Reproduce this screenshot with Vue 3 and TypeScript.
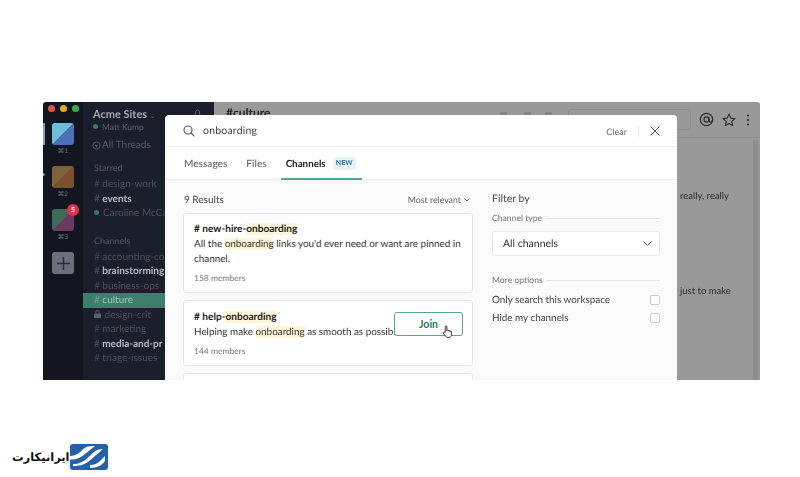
<script setup lang="ts">
interface Chan { name: string; bold?: boolean; active?: boolean; lock?: boolean }
const channels: Chan[] = [
  { name: 'accounting-costs' },
  { name: 'brainstorming', bold: true },
  { name: 'business-ops' },
  { name: 'culture', active: true },
  { name: 'design-crit', lock: true },
  { name: 'marketing' },
  { name: 'media-and-pr', bold: true },
  { name: 'triage-issues' },
]
</script>

<template>
  <div class="page">
    <div class="window">
      <aside class="rail">
        <i class="mark"></i><i class="pip"></i>
        <div class="lights"><i class="r"></i><i class="y"></i><i class="g"></i></div>
        <div class="team t1"></div><span class="key">⌘1</span>
        <div class="team t2"></div><span class="key">⌘2</span>
        <div class="team t3"><b class="badge">5</b></div><span class="key">⌘3</span>
        <div class="plus">
          <svg width="13" height="13" viewBox="0 0 14 14"><path d="M7 0v14M0 7h14" stroke="#2a2c3a" stroke-width="1.6" /></svg>
        </div>
      </aside>
      <aside class="side">
        <div class="acme">Acme Sites <small>⌄</small></div>
        <svg class="bell" width="9" height="10" viewBox="0 0 9 10" fill="none" stroke="#666a78"><path d="M4.500 1C3 1 2.500 2.500 2.500 4S1.500 7 .7 7.500h7.600C7.500 7 6.500 5.500 6.500 4S6 1 4.500 1z" /></svg>
        <div class="user"><i class="dot"></i>Matt Kump</div>
        <div class="threads">
          <svg width="9" height="9" viewBox="0 0 10 10" fill="none" stroke="#5d6070"><circle cx="5" cy="5" r="4" /><path d="M3.500 5h3M5 5v2" /></svg>
          All Threads
        </div>
        <div class="head starred">Starred</div>
        <div class="item"><span class="hash">#</span> design-work</div>
        <div class="item bold"><span class="hash">#</span> events</div>
        <div class="item"><i class="dot"></i>Caroline McCarthy</div>
        <div class="head chans">Channels</div>
        <div v-for="c in channels" :key="c.name" class="item" :class="{ bold: c.bold, active: c.active }">
          <svg v-if="c.lock" class="lock" width="7" height="8" viewBox="0 0 7 8"><rect y="3.400" width="7" height="4.600" rx="1" fill="#5d6070" /><path d="M1.700 3.600V2.400a1.800 1.800 0 0 1 3.600 0v1.200" fill="none" stroke="#5d6070" /></svg>
          <span v-else class="hash">#</span> {{ c.name }}
        </div>
      </aside>
      <main class="main">
        <div class="bar">
          <span class="title">#culture</span>
          <div class="peek"><i></i><i></i><i class="last"></i></div>
          <div class="tools">
            <div class="searchbox"></div>
            <svg width="15" height="15" viewBox="0 0 16 16" fill="none" stroke="#2c2c2c" stroke-width="1.300"><circle cx="8" cy="8" r="6.600" /><circle cx="8" cy="8" r="2.700" /><path d="M10.700 5.600v3.600c0 2 3.900 2 3.900-1.200" /></svg>
            <svg width="14" height="14" viewBox="0 0 16 16" fill="none" stroke="#2c2c2c" stroke-width="1.300" stroke-linejoin="round"><path d="M8 1.300l2 4.500 4.800.5-3.600 3.200 1 4.800L8 11.900l-4.200 2.400 1-4.800L1.200 6.300l4.800-.5z" /></svg>
            <svg class="dots" width="4" height="12" viewBox="0 0 4 12" fill="#2c2c2c"><circle cx="2" cy="1.500" r="1.100" /><circle cx="2" cy="6" r="1.100" /><circle cx="2" cy="10.500" r="1.100" /></svg>
          </div>
        </div>
        <div class="feed">
          <p class="line one">really, really</p>
          <p class="line two">just to make</p>
        </div>
        <div class="scroll"></div>
      </main>

      <section class="modal">
        <div class="search">
          <svg width="12" height="12" viewBox="0 0 12 12" fill="none" stroke="#555" stroke-width="1.100"><circle cx="5" cy="5" r="4" /><path d="M8 8l3.400 3.400" /></svg>
          <span class="query">onboarding</span>
          <span class="clear">Clear</span>
          <i class="sep"></i>
          <svg width="10" height="10" viewBox="0 0 10 10" stroke="#555" stroke-width="1"><path d="M.5.5l9 9M9.500.5l-9 9" /></svg>
        </div>
        <nav class="tabs">
          <span class="tab">Messages</span>
          <span class="tab">Files</span>
          <span class="tab on">Channels<em class="new">NEW</em></span>
        </nav>
        <div class="body">
          <div class="results">
            <div class="rhead">
              <span class="count">9 Results</span>
              <span class="sort">Most relevant
                <svg width="6" height="4" viewBox="0 0 6 4" fill="none" stroke="#666"><path d="M.5.5L3 3 5.500.5" /></svg>
              </span>
            </div>
            <article class="card first">
              <h4># new-hire-<mark>onboarding</mark></h4>
              <p>All the <mark>onboarding</mark> links you'd ever need or want are pinned in channel.</p>
              <small>158 members</small>
            </article>
            <article class="card second">
              <h4># help-<mark>onboarding</mark></h4>
              <p class="nowrap">Helping make <mark>onboarding</mark> as smooth as possible</p>
              <small>144 members</small>
              <button class="join">Join</button>
              <svg class="hand" width="12" height="14" viewBox="0 0 12 14" fill="#fff" stroke="#222" stroke-width=".9" stroke-linejoin="round"><path d="M3.200 7.400V1.700c0-1.200 1.700-1.200 1.700 0v3.900c0-.9 1.500-.9 1.500 0v.5c0-.9 1.500-.9 1.500 0v.6c0-.8 1.500-.8 1.500.1v3c0 1.600-1 2.700-2.500 2.700H5.800c-1 0-1.600-.4-2.200-1.300L1.300 8.300c-.6-1 .6-1.800 1.300-1z" /></svg>
            </article>
            <article class="card third"></article>
          </div>
          <div class="filters">
            <div class="ftitle">Filter by</div>
            <div class="label">Channel type<i></i></div>
            <div class="select">All channels
              <svg width="9" height="5" viewBox="0 0 9 5" fill="none" stroke="#555"><path d="M.5.500L4.500 4.500 8.500.5" /></svg>
            </div>
            <div class="label more">More options<i></i></div>
            <label class="opt">Only search this workspace<span class="box"></span></label>
            <label class="opt">Hide my channels<span class="box"></span></label>
          </div>
        </div>
      </section>
    </div>

    <footer class="brand">
      <span class="fa" dir="rtl" lang="fa">ایرانیکارت</span>
      <svg width="38" height="26" viewBox="0 0 38 26">
        <rect width="38" height="26" rx="3" fill="#2560a8" />
        <path d="M0 12C7 12 10 8 14 4.500 16 2.800 19 2 22 2h3L15 10c-4 3.500-9 6-15 5.500z" fill="#fff" />
        <path d="M3 20c6 0 10-2 14-5.500L24 8c2-2 5-3 9-3L21 15.500C16 20 11 22 3 22z" fill="#fff" />
        <path d="M20 21c5 0 8-2 10-4l5-5v5c-3 4-7 7-15 7z" fill="#fff" />
      </svg>
    </footer>
  </div>
</template>

<style>
html, body { margin: 0; background: #fff; }
</style>

<style scoped>
.page {
  width: 800px; height: 477px; overflow: hidden; background: #fff;
  display: flex; flex-direction: column; position: relative;
  font-family: Lato, "Noto Sans", sans-serif; color: #222;
  text-rendering: geometricPrecision;
}
.window {
  margin: 102px 0 0 43px; width: 717px; height: 278px; flex: none;
  display: flex; position: relative; overflow: hidden;
  border-radius: 3px 3px 0 0; filter: blur(.4px);
}
.rail { width: 40px; flex: none; background: #14161f; display: flex; flex-direction: column; align-items: center; position: relative; }
.mark { position: absolute; left: 0; top: 21px; width: 2px; height: 22px; background: #9a9ba2; border-radius: 0 1px 1px 0; }
.pip { position: absolute; left: 0; top: 71px; width: 2px; height: 3px; background: #8a8b92; border-radius: 0 2px 2px 0; }
.lights { display: flex; gap: 5px; padding: 3px 0 0; height: 21px; box-sizing: border-box; align-self: flex-start; margin-left: 5px; flex: none; }
.lights i { width: 7px; height: 7px; border-radius: 50%; }
.r { background: #e8504f; } .y { background: #e2a72e; } .g { background: #2dae4b; }
.team { width: 22px; height: 22px; border-radius: 3px; position: relative; flex: none; }
.t1 { background: linear-gradient(135deg, #6cbfdc 50%, #4d6fb5 50%); }
.t2 { background: linear-gradient(135deg, #7b6238 50%, #7c4f2d 50%); }
.t3 { background: linear-gradient(135deg, #3f6a55 50%, #6a3a5f 50%); }
.key { font-size: 6.500px; color: #6e7080; height: 21px; line-height: 12px; padding-top: 1px; box-sizing: border-box; flex: none; }
.badge { position: absolute; top: -5px; right: -5px; width: 12px; height: 12px; border-radius: 50%; background: #d8364f; color: #fff; font-size: 7px; line-height: 12px; text-align: center; }
.plus { width: 22px; height: 22px; border-radius: 3px; background: #6d6e79; display: grid; place-items: center; flex: none; }
.side { width: 131px; flex: none; background: #1b1e2b; overflow: hidden; white-space: nowrap; color: #565a6a; font-size: 10px; position: relative; }
.bell { position: absolute; left: 110px; top: 7px; }
.acme { color: #a5a7b0; font-weight: 700; font-size: 11px; padding: 6px 0 0 10px; line-height: 14px; }
.acme small { font-size: 7px; font-weight: 400; color: #6e7080; }
.user { padding-left: 10px; font-size: 8.500px; line-height: 9px; color: #5d6070; }
.dot { display: inline-block; width: 5px; height: 5px; border-radius: 50%; background: #2f7d6b; margin-right: 4px; vertical-align: 1px; }
.threads { padding: 7px 0 0 9px; line-height: 12px; display: flex; align-items: center; gap: 1px; }
.head { padding-left: 11px; font-size: 9px; line-height: 12px; color: #565a6a; margin-bottom: 3px; }
.starred { margin-top: 11px; }
.chans { margin-top: 14px; }
.item { padding-left: 11px; height: 14.500px; line-height: 14.500px; color: #50535f; }
.hash { color: #454857; }
.item.bold { color: #b9bbc2; font-weight: 700; }
.item.active { background: #3d7f6c; color: #9fc6ba; }
.active .hash { color: #6ba393; }
.lock { margin-right: 1px; }
.main { flex: 1; background: #999; position: relative; min-width: 0; }
.bar { height: 35px; border-bottom: 1px solid #8d8d8d; position: relative; display: flex; align-items: center; justify-content: flex-end; padding-right: 10px; box-sizing: content-box; }
.title { position: absolute; left: 12px; top: 3px; font-weight: 700; font-size: 12px; color: #222; }
.peek { position: absolute; left: 286px; top: 10px; display: flex; gap: 17px; }
.peek i { width: 7px; height: 5px; background: #858585; }
.peek .last { margin-left: -3px; }
.tools { display: flex; align-items: center; gap: 8px; }
.dots { margin-left: 2px; }
.searchbox { width: 121px; height: 19px; border: 1px solid #8d8d8d; border-radius: 3px; }
.feed { position: relative; }
.line { position: absolute; margin: 0; font-size: 9.500px; left: 466px; color: #2c2c2c; white-space: nowrap; }
.one { top: 53px; } .two { top: 148px; }
.scroll { position: absolute; right: 2px; top: 38px; bottom: 0; width: 5px; background: #8e8e8e; }

.modal {
  position: absolute; left: 122px; top: 13px; width: 512px; height: 265px;
  background: #fff; border-radius: 4px 4px 0 0; overflow: hidden;
  display: flex; flex-direction: column;
}
.search { height: 32px; box-sizing: border-box; flex: none; border-bottom: 1px solid #eee; display: flex; align-items: center; padding: 1px 17px 0 18px; }
.query { margin-left: 8px; flex: 1; font-size: 10.500px; color: #444; letter-spacing: .2px; }
.clear { font-size: 9px; color: #666; }
.sep { width: 1px; height: 11px; background: #e8e8e8; margin: 0 11px; }
.tabs { height: 33px; box-sizing: border-box; flex: none; border-bottom: 1px solid #ececec; display: flex; gap: 19px; padding-left: 19px; }
.tab { font-size: 10.100px; color: #666; line-height: 35px; font-weight: 500; height: 32px; box-sizing: border-box; }
.tab.on { color: #222; font-size: 9.800px; font-weight: 700; border-bottom: 2px solid #4bab8c; padding: 0 0 0 5px; width: 81px; margin-left: -5px; white-space: nowrap; display: flex; align-items: flex-start; height: 33px; }
.new { font-style: normal; font-size: 7px; line-height: 13px; color: #2a6f9e; background: #e6f3fa; width: 23px; text-align: center; border-radius: 2px; margin: 10px 6px 0 auto; font-weight: 700; }
.body { flex: 1; background: #fafafa; display: flex; min-height: 0; }
.results { width: 308px; padding-left: 18px; flex: none; box-sizing: border-box; }
.rhead { height: 33px; display: flex; justify-content: space-between; align-items: center; padding: 6px 3px 0 1px; box-sizing: border-box; }
.count { font-size: 10px; color: #555; font-weight: 500; }
.sort { font-size: 8.800px; color: #666; display: flex; align-items: center; gap: 3px; }
.card { width: 290px; box-sizing: border-box; background: #fff; border: 1px solid #e6e6e6; border-radius: 3px; padding: 8px 10px 7px; position: relative; font-size: 9.900px; color: #333; }
.card h4 { margin: 0; font-size: 10.100px; line-height: 15px; color: #222; font-weight: 700; }
.card p { margin: 0; line-height: 14.500px; }
.card small { display: block; font-size: 8.500px; color: #777; margin-top: 6px; line-height: 12px; }
mark { background: #fdf4d9; color: inherit; }
.first { height: 80px; margin-bottom: 7px; }
.second { height: 66px; margin-bottom: 7px; padding-top: 9px; }
.second small { margin-top: 5px; }
.nowrap { white-space: nowrap; overflow: hidden; }
.third { height: 30px; }
.join { position: absolute; left: 210px; top: 11px; width: 69px; height: 24px; background: #fff; border: 1px solid #57a58d; border-radius: 3px; color: #1f7a60; font: 700 10.500px Lato, sans-serif; padding: 0; }
.hand { position: absolute; left: 258px; top: 24px; }
.filters { flex: 1; padding: 13px 17px 0 19px; font-size: 10px; }
.ftitle { font-size: 10.500px; font-weight: 500; color: #555; line-height: 13px; }
.label { display: flex; align-items: center; gap: 4px; font-size: 8.600px; color: #777; margin-top: 6px; line-height: 12px; }
.label i { flex: 1; height: 1px; background: #e6e6e6; }
.select { margin-top: 7px; height: 23px; box-sizing: content-box; background: #fff; border: 1px solid #e8e8e8; border-radius: 3px; display: flex; align-items: center; justify-content: space-between; padding: 0 7px 0 10px; font-size: 10.500px; color: #333; }
.label.more { margin-top: 18px; margin-bottom: 5px; }
.opt { display: flex; justify-content: space-between; align-items: center; font-size: 9.900px; color: #444; height: 18px; }
.box { width: 8px; height: 8px; border: 1px solid #ccc; border-radius: 2px; background: #fff; }

.brand { margin: 64px 0 0 12px; width: 96px; display: flex; align-items: center; justify-content: space-between; }
.fa { font-family: "DejaVu Sans", sans-serif; font-weight: 700; font-size: 11.500px; color: #111; white-space: nowrap; }
</style>
